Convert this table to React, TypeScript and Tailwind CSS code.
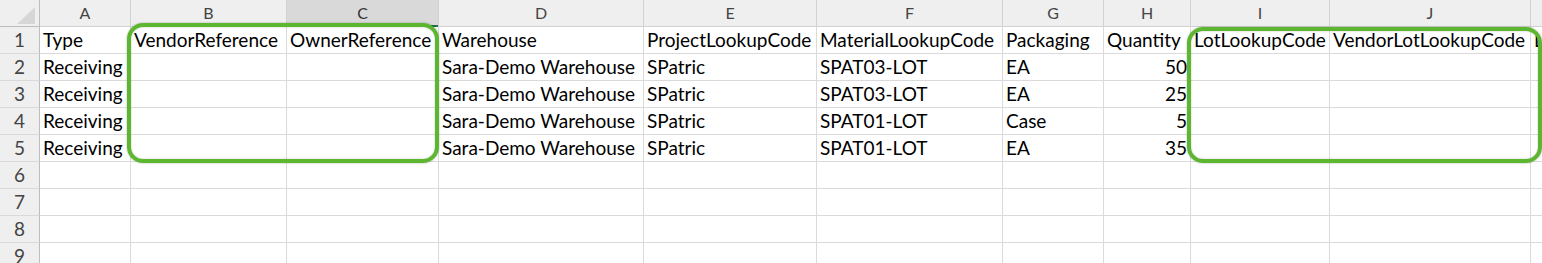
import React from 'react';

type Col = { key: string; width: string; align?: 'right' };

// column widths include the 1px gridline on the right
const columns: Col[] = [
  { key: 'A', width: 'w-[91px]' },
  { key: 'B', width: 'w-[156px]' },
  { key: 'C', width: 'w-[152px]' },
  { key: 'D', width: 'w-[205px]' },
  { key: 'E', width: 'w-[173px]' },
  { key: 'F', width: 'w-[186px]' },
  { key: 'G', width: 'w-[101px]' },
  { key: 'H', width: 'w-[87px]' },
  { key: 'I', width: 'w-[139px]' },
  { key: 'J', width: 'w-[201px]' },
  { key: 'K', width: 'w-[160px]' },
];

type CellValue = string | number;

const rows: CellValue[][] = [
  ['Type', 'VendorReference', 'OwnerReference', 'Warehouse', 'ProjectLookupCode', 'MaterialLookupCode', 'Packaging', 'Quantity', 'LotLookupCode', 'VendorLotLookupCode', 'LotExpirationDate'],
  ['Receiving', '', '', 'Sara-Demo Warehouse', 'SPatric', 'SPAT03-LOT', 'EA', 50, '', '', ''],
  ['Receiving', '', '', 'Sara-Demo Warehouse', 'SPatric', 'SPAT03-LOT', 'EA', 25, '', '', ''],
  ['Receiving', '', '', 'Sara-Demo Warehouse', 'SPatric', 'SPAT01-LOT', 'Case', 5, '', '', ''],
  ['Receiving', '', '', 'Sara-Demo Warehouse', 'SPatric', 'SPAT01-LOT', 'EA', 35, '', '', ''],
  ['', '', '', '', '', '', '', '', '', '', ''],
  ['', '', '', '', '', '', '', '', '', '', ''],
  ['', '', '', '', '', '', '', '', '', '', ''],
  ['', '', '', '', '', '', '', '', '', '', ''],
];

function CornerCell() {
  return (
    <div className="w-[40px] h-[27px] shrink-0 bg-[#efefef] border-r border-b border-[#bdbdbd]">
      <svg width="39" height="26" viewBox="0 0 39 26">
        <polygon points="17,24 35,24 35,7" fill="#d6d6d6" />
      </svg>
    </div>
  );
}

function ColumnHeader({ col }: { col: Col }) {
  const selected = col.key === 'C';
  return (
    <div
      className={`${col.width} h-[27px] shrink-0 relative flex justify-center border-r border-b border-[#d2d2d2] text-[16px] leading-[26px] ${
        selected ? 'bg-[#d9d9d9] text-[#333]' : 'bg-[#efefef] text-[#444]'
      }`}
    >
      {col.key}
      {selected && <div className="absolute left-0 right-0 bottom-[-1px] h-[2px] bg-[#217346]" />}
    </div>
  );
}

function Cell({ col, value }: { col: Col; value: CellValue }) {
  const numeric = typeof value === 'number';
  return (
    <div
      className={`${col.width} h-[27px] shrink-0 overflow-hidden whitespace-nowrap border-r border-b border-[#dadada] px-[3px] text-[19px] leading-[26px] text-black ${
        numeric ? 'text-right' : 'text-left'
      }`}
    >
      {value}
    </div>
  );
}

export default function App() {
  return (
    <div
      className="relative w-[1542px] h-[263px] overflow-hidden bg-white"
      style={{ fontFamily: 'Lato, "Liberation Sans", sans-serif' }}
    >
      <div className="flex flex-col">
        <div className="flex">
          <CornerCell />
          {columns.map((col) => (
            <ColumnHeader key={col.key} col={col} />
          ))}
        </div>

        {rows.map((row, i) => (
          <div key={i} className="flex">
            <div className="w-[40px] h-[27px] shrink-0 bg-[#efefef] border-r border-b border-r-[#bdbdbd] border-b-[#d9d9d9] text-center text-[19px] leading-[26px] text-[#444]">
              {i + 1}
            </div>
            {columns.map((col, j) => (
              <Cell key={col.key} col={col} value={row[j]} />
            ))}
          </div>
        ))}
      </div>

      {/* callout boxes around the empty reference / lot columns */}
      <div className="absolute left-[127px] top-[23px] w-[312px] h-[140px] rounded-[16px] border-4 border-[#5cb630] shadow-[0_0_2px_rgba(0,0,0,0.35),inset_0_0_2px_rgba(0,0,0,0.25)]" />
      <div className="absolute left-[1187px] top-[27px] w-[355px] h-[136px] rounded-[16px] border-4 border-[#5cb630] shadow-[0_0_2px_rgba(0,0,0,0.35),inset_0_0_2px_rgba(0,0,0,0.25)]" />
    </div>
  );
}
